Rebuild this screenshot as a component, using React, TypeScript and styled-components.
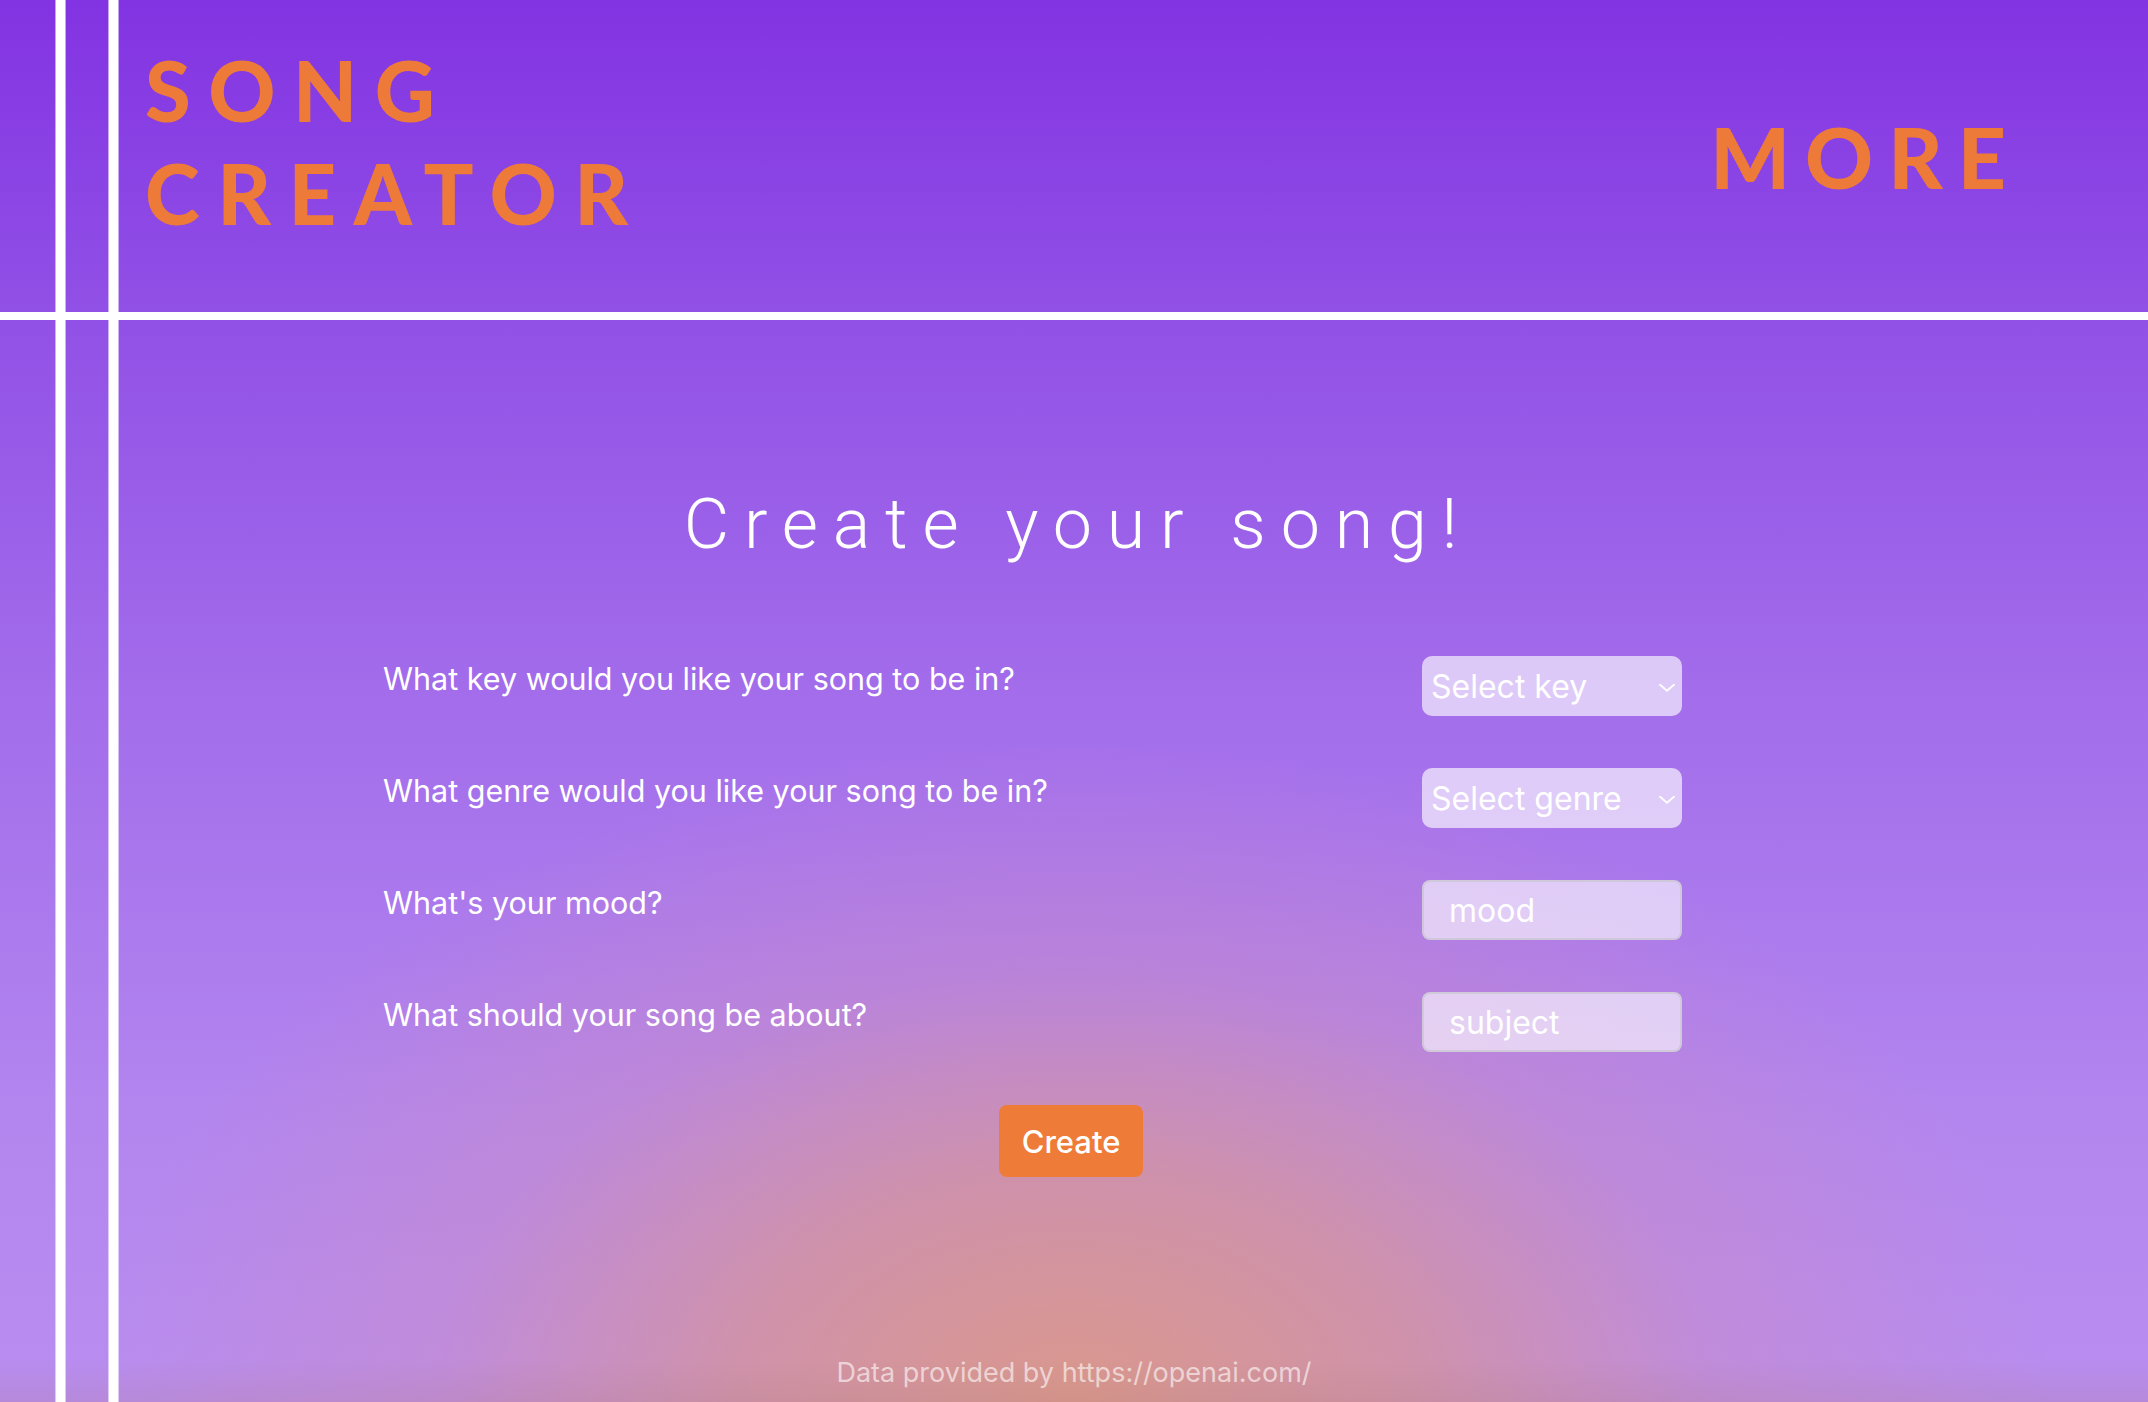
import React from "react";
import styled, { createGlobalStyle } from "styled-components";

const GlobalStyle = createGlobalStyle`
  * { box-sizing: border-box; }
  html, body { margin: 0; padding: 0; height: 100%; }
  body {
    font-family: Inter, "Liberation Sans", sans-serif;
    background: #8233e2;
  }
`;

const Page = styled.div`
  position: relative;
  min-height: 100vh;
  display: flex;
  flex-direction: column;
  overflow: hidden;
  background:
    linear-gradient(180deg, rgba(150, 110, 130, 0) 0%, rgba(150, 110, 130, 0) 97%, rgba(170, 120, 120, 0.18) 100%),
    radial-gradient(ellipse 980px 660px at 50% 100%, rgba(218, 152, 140, 1) 0%, rgba(214, 148, 152, 0.78) 35%, rgba(205, 140, 185, 0.38) 65%, rgba(200, 140, 200, 0) 100%),
    linear-gradient(180deg, #8233e2 0%, #9150e6 22%, #a36deb 50%, #b386ef 80%, #b98df0 100%);
`;

const VRule = styled.div<{ $left: number }>`
  position: absolute;
  top: 0;
  bottom: 0;
  left: ${(p) => p.$left}px;
  width: 11px;
  background: #fff;
  border-left: 1px solid rgba(255, 255, 255, 0.55);
  border-right: 1px solid rgba(255, 255, 255, 0.55);
  background-clip: padding-box;
  pointer-events: none;
`;

const Header = styled.header`
  height: 312px;
  display: flex;
  justify-content: space-between;
  align-items: flex-start;
  padding: 39px 127px 0 145px;
`;

const Logo = styled.h1`
  margin: 0;
  font-family: Lato, "Liberation Sans", sans-serif;
  font-weight: 900;
  font-size: 83px;
  line-height: 103px;
  letter-spacing: 17.5px;
  color: #ed7a38;
`;

const More = styled.a`
  margin-top: 66px;
  font-family: Lato, "Liberation Sans", sans-serif;
  font-weight: 900;
  font-size: 84px;
  line-height: 103px;
  letter-spacing: 15px;
  color: #ed7a38;
  text-decoration: none;
`;

const HRule = styled.div`
  height: 8px;
  background: #fff;
  position: relative;
  z-index: 1;
`;

const Main = styled.main`
  display: flex;
  flex-direction: column;
  align-items: center;
`;

const Title = styled.h2`
  margin: 162px 0 0 0;
  font-family: Roboto, "Liberation Sans", sans-serif;
  font-weight: 300;
  font-size: 70px;
  line-height: 84px;
  letter-spacing: 14.8px;
  color: #fff;
  padding-left: 8px;
`;

const Form = styled.form`
  align-self: flex-start;
  margin: 90px 0 0 383px;
  width: 1299px;
  display: flex;
  flex-direction: column;
  gap: 52px;
`;

const Row = styled.div`
  display: flex;
  justify-content: space-between;
  align-items: flex-start;
`;

const Label = styled.label`
  padding-top: 5px;
  font-size: 30.5px;
  line-height: 36px;
  color: #fff;
`;

const SelectWrap = styled.div`
  position: relative;
  width: 260px;
  height: 60px;
`;

const Select = styled.select`
  appearance: none;
  -webkit-appearance: none;
  width: 100%;
  height: 100%;
  border: none;
  border-radius: 10px;
  padding: 0 40px 0 9px;
  background: rgba(255, 255, 255, 0.64);
  color: #fff;
  font-family: Inter, "Liberation Sans", sans-serif;
  font-size: 32px;
  outline: none;
`;

const Chevron = styled.svg`
  position: absolute;
  right: 6px;
  top: 50%;
  width: 18px;
  height: 12px;
  transform: translateY(-35%);
  pointer-events: none;
`;

const Input = styled.input`
  width: 260px;
  height: 60px;
  border: 2px solid rgba(205, 200, 215, 0.9);
  border-radius: 8px;
  padding: 0 0 0 25px;
  background: rgba(255, 255, 255, 0.62);
  color: #fff;
  font-family: Inter, "Liberation Sans", sans-serif;
  font-size: 32px;
  outline: none;
  &::placeholder {
    color: #fff;
    opacity: 1;
  }
`;

const Button = styled.button`
  align-self: center;
  margin: 1px 0 0 77px;
  width: 144px;
  height: 72px;
  border: none;
  border-radius: 8px;
  background: #ee7b38;
  color: #fff;
  font-family: Inter, "Liberation Sans", sans-serif;
  font-size: 31px;
  font-weight: 500;
  cursor: pointer;
`;

const Footer = styled.footer`
  margin-top: auto;
  padding-bottom: 13px;
  text-align: center;
  font-size: 27px;
  line-height: 33px;
  color: rgba(255, 255, 255, 0.6);
`;

function SelectField({ placeholder, options }: { placeholder: string; options: string[] }) {
  return (
    <SelectWrap>
      <Select defaultValue="">
        <option value="" disabled>
          {placeholder}
        </option>
        {options.map((o) => (
          <option key={o} value={o}>
            {o}
          </option>
        ))}
      </Select>
      <Chevron viewBox="0 0 18 12" fill="none">
        <path d="M2 3 L9 9 L16 3" stroke="#fff" strokeWidth="1.8" strokeLinecap="round" strokeLinejoin="round" />
      </Chevron>
    </SelectWrap>
  );
}

export default function App() {
  return (
    <>
      <GlobalStyle />
      <Page>
        <VRule $left={55} />
        <VRule $left={108} />
        <Header>
          <Logo>
            SONG
            <br />
            CREATOR
          </Logo>
          <More href="#">MORE</More>
        </Header>
        <HRule />
        <Main>
          <Title>Create your song!</Title>
          <Form onSubmit={(e) => e.preventDefault()}>
            <Row>
              <Label>What key would you like your song to be in?</Label>
              <SelectField placeholder="Select key" options={["C", "D", "E", "F", "G", "A", "B"]} />
            </Row>
            <Row>
              <Label>What genre would you like your song to be in?</Label>
              <SelectField placeholder="Select genre" options={["Pop", "Rock", "Jazz", "Hip hop", "Country"]} />
            </Row>
            <Row>
              <Label>What's your mood?</Label>
              <Input placeholder="mood" />
            </Row>
            <Row>
              <Label>What should your song be about?</Label>
              <Input placeholder="subject" />
            </Row>
            <Button type="submit">Create</Button>
          </Form>
        </Main>
        <Footer>Data provided by https://openai.com/</Footer>
      </Page>
    </>
  );
}
